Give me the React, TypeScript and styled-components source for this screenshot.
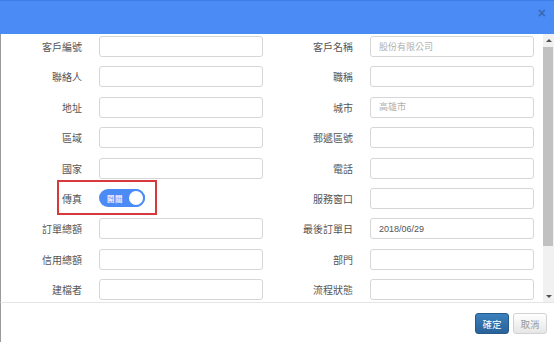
import React from "react";
import styled, { createGlobalStyle, css } from "styled-components";

const GlobalStyle = createGlobalStyle`
  html, body {
    margin: 0;
    padding: 0;
    background: #ffffff;
    font-family: "Noto Sans CJK TC", "Liberation Sans", sans-serif;
  }
`;

const Modal = styled.div`
  width: 554px;
  height: 342px;
  display: flex;
  flex-direction: column;
  background: #ffffff;
  overflow: hidden;
`;

const Header = styled.div`
  height: 34px;
  flex: none;
  background: #4a8bf5;
  border-top: 1px solid #3f7de6;
  box-sizing: border-box;
  display: flex;
  align-items: flex-start;
  justify-content: flex-end;
  padding: 5px 8px 0 0;
`;

const Close = styled.span`
  font-family: "Liberation Sans", sans-serif;
  font-size: 14px;
  font-weight: bold;
  line-height: 14px;
  color: rgba(40, 60, 100, 0.45);
`;

const Body = styled.div`
  height: 268px;
  flex: none;
  display: flex;
  border-left: 1px solid #9a9a9a;
`;

const FormArea = styled.div`
  flex: 1;
  overflow: hidden;
  padding-top: 2px;
`;

const ScrollBar = styled.div`
  width: 11px;
  flex: none;
  display: flex;
  flex-direction: column;
  background: #f1f1f1;
`;

const ArrowBox = styled.div`
  height: 12px;
  flex: none;
  display: flex;
  align-items: center;
  justify-content: center;
`;

const Arrow = styled.span<{ $down?: boolean }>`
  width: 0;
  height: 0;
  border-left: 3px solid transparent;
  border-right: 3px solid transparent;
  ${(p) =>
    p.$down
      ? css`
          border-top: 3px solid #505050;
        `
      : css`
          border-bottom: 3px solid #505050;
        `}
`;

const Track = styled.div`
  flex: 1;
  padding-top: 1px;
`;

const Thumb = styled.div`
  background: #c1c1c1;
  margin: 0 1px 0 0;
`;

const FormGrid = styled.div`
  display: grid;
  grid-template-columns: 262px 262px;
  column-gap: 9px;
  grid-auto-rows: 21px;
  row-gap: 9.4px;
`;

const Field = styled.div<{ $highlight?: boolean }>`
  position: relative;
  display: grid;
  grid-template-columns: 81px 1fr;
  column-gap: 17px;
  align-items: center;
  ${(p) =>
    p.$highlight &&
    css`
      &::after {
        content: "";
        position: absolute;
        left: 56px;
        top: -8px;
        bottom: -6px;
        width: 100px;
        box-sizing: border-box;
        border: 2px solid #d8393c;
      }
    `}
`;

const Label = styled.label`
  text-align: right;
  font-size: 10px;
  color: #555555;
  white-space: nowrap;
`;

const Input = styled.input`
  height: 21px;
  width: 100%;
  box-sizing: border-box;
  border: 1px solid #d6d6d6;
  border-radius: 3px;
  padding: 0 8px;
  font-family: "Liberation Sans", "Noto Sans CJK TC", sans-serif;
  font-size: 9px;
  color: #555555;
  outline: none;
  &::placeholder {
    color: #b0b0b0;
    font-family: "Noto Sans CJK TC", sans-serif;
  }
`;

const Switch = styled.div<{ $on: boolean }>`
  width: 46px;
  height: 18px;
  box-sizing: border-box;
  border-radius: 9px;
  background: ${(p) => (p.$on ? "#4a8bf5" : "#cccccc")};
  display: flex;
  align-items: center;
  justify-content: space-between;
  padding-left: 8px;
`;

const SwitchText = styled.span`
  font-size: 7.5px;
  font-weight: bold;
  color: rgba(255, 255, 255, 0.9);
  letter-spacing: 0.5px;
`;

const Knob = styled.span`
  width: 18px;
  height: 18px;
  box-sizing: border-box;
  border-radius: 50%;
  background: #ffffff;
  border: 2px solid #4a8bf5;
`;

const Footer = styled.div`
  flex: 1;
  border-top: 1px solid #e5e5e5;
  border-left: 1px solid #9a9a9a;
  display: flex;
  justify-content: flex-end;
  align-items: flex-start;
  gap: 4px;
  padding: 10px 7px 0 0;
`;

const Button = styled.button<{ $primary?: boolean }>`
  width: 34px;
  height: 21px;
  padding: 0;
  border-radius: 3px;
  font-family: "Noto Sans CJK TC", sans-serif;
  font-size: 9.5px;
  ${(p) =>
    p.$primary
      ? css`
          color: #ffffff;
          background: linear-gradient(#3a80bd, #2a6299);
          border: 1px solid #265a88;
        `
      : css`
          color: #9a9a9a;
          background: linear-gradient(#ffffff, #e6e6e6);
          border: 1px solid #d2d2d2;
        `}
`;

type Row = { label: string; placeholder?: string; value?: string; toggle?: boolean };

const rows: Row[] = [
  { label: "客戶編號" },
  { label: "客戶名稱", placeholder: "股份有限公司" },
  { label: "聯絡人" },
  { label: "職稱" },
  { label: "地址" },
  { label: "城市", placeholder: "高雄市" },
  { label: "區域" },
  { label: "郵遞區號" },
  { label: "國家" },
  { label: "電話" },
  { label: "傳真", toggle: true },
  { label: "服務窗口" },
  { label: "訂單總額" },
  { label: "最後訂單日", value: "2018/06/29" },
  { label: "信用總額" },
  { label: "部門" },
  { label: "建檔者" },
  { label: "流程狀態" },
];

// visible share of the scrolled form, for the thumb length
const thumbRatio = 0.82;

const App: React.FC = () => {
  return (
    <>
      <GlobalStyle />
      <Modal>
        <Header>
          <Close>×</Close>
        </Header>
        <Body>
          <FormArea>
            <FormGrid>
              {rows.map((row, index) => (
                <Field key={`field_${index}`} $highlight={row.toggle}>
                  <Label>{row.label}</Label>
                  {row.toggle ? (
                    <Switch $on>
                      <SwitchText>開關</SwitchText>
                      <Knob />
                    </Switch>
                  ) : (
                    <Input placeholder={row.placeholder} defaultValue={row.value} />
                  )}
                </Field>
              ))}
            </FormGrid>
          </FormArea>
          <ScrollBar>
            <ArrowBox>
              <Arrow />
            </ArrowBox>
            <Track>
              <Thumb style={{ height: `${thumbRatio * 100}%` }} />
            </Track>
            <ArrowBox>
              <Arrow $down />
            </ArrowBox>
          </ScrollBar>
        </Body>
        <Footer>
          <Button $primary>確定</Button>
          <Button>取消</Button>
        </Footer>
      </Modal>
    </>
  );
};

export default App;
